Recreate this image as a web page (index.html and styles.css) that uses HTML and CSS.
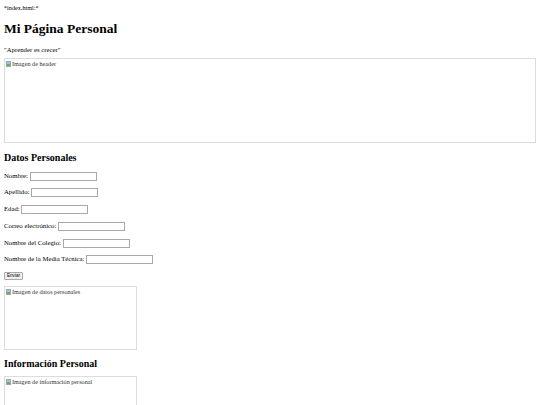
FILE: index.html
```html
<!DOCTYPE html>
<html lang="es">
<head>
    <meta charset="UTF-8">
    <meta name="viewport" content="width=device-width, initial-scale=1.0">
    <title>Mi Página Personal</title>
    <link rel="stylesheet" href="styles.css">
</head>
<body>
    <div class="file-name">*index.html:*</div>

    <header>
        <h1>Mi Página Personal</h1>
        <p class="motto">"Aprender es crecer"</p>
        <div class="img-box img-header">
            <span class="broken-icon"></span>Imagen de header
        </div>
    </header>

    <section>
        <h2>Datos Personales</h2>
        <form>
            <p><label for="nombre">Nombre:</label> <input type="text" id="nombre"></p>
            <p><label for="apellido">Apellido:</label> <input type="text" id="apellido"></p>
            <p><label for="edad">Edad:</label> <input type="text" id="edad"></p>
            <p><label for="correo">Correo electrónico:</label> <input type="text" id="correo"></p>
            <p><label for="colegio">Nombre del Colegio:</label> <input type="text" id="colegio"></p>
            <p><label for="media">Nombre de la Media Técnica:</label> <input type="text" id="media"></p>
            <button type="button" class="send-button">Enviar</button>
        </form>
        <div class="img-box img-small">
            <span class="broken-icon"></span>Imagen de datos personales
        </div>
    </section>

    <section>
        <h2>Información Personal</h2>
        <div class="img-box img-small">
            <span class="broken-icon"></span>Imagen de información personal
        </div>
    </section>
</body>
</html>
```

FILE: styles.css
```css
body {
    margin: 4px;
    font-family: "Liberation Serif", "Times New Roman", serif;
    font-size: 6.75px;
    color: #000000;
    background-color: #FFFFFF;
}

.file-name {
    font-size: 6.2px;
    line-height: 7.8px;
}

header {
    padding-bottom: 2px;
}

h1 {
    font-size: 13.5px;
    margin: 9px 0;
}

h2 {
    font-size: 10px;
    margin: 7.5px 0;
}

p {
    margin: 6.75px 0;
}

.motto {
    margin-bottom: 4.75px;
}

.img-box {
    box-sizing: border-box;
    border: 1px solid #DCDCDC;
    padding: 1px;
    color: #333333;
    font-size: 6.2px;
    line-height: 7px;
}

.img-header {
    height: 85px;
}

.img-small {
    width: 133px;
    height: 64px;
    margin-top: 6px;
}

.broken-icon {
    display: inline-block;
    width: 5px;
    height: 6px;
    margin-right: 1px;
    vertical-align: -1px;
    border: 0.5px solid #9AA6B0;
    background: linear-gradient(180deg, #9CC5E8 0%, #9CC5E8 50%, #6DAE55 50%, #6DAE55 100%);
    box-sizing: border-box;
}

form p {
    margin: 6.75px 0;
    line-height: 10px;
}

input {
    box-sizing: border-box;
    width: 67px;
    height: 9px;
    padding: 0 1px;
    border: 1px solid #A9A9A9;
    font-size: 5.6px;
    vertical-align: middle;
}

.send-button {
    box-sizing: border-box;
    height: 8.5px;
    padding: 0 2px;
    font-family: "Liberation Sans", Arial, sans-serif;
    font-size: 4.6px;
    color: #000000;
    background-color: #EFEFEF;
    border: 1px solid #A9A9A9;
    border-radius: 1px;
    line-height: 6px;
}
```
